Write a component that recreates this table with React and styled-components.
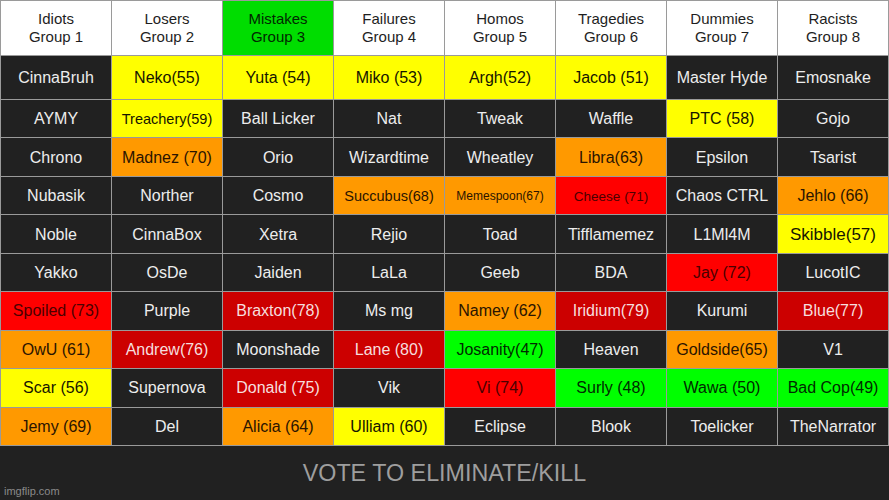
import React from "react";
import styled, { createGlobalStyle } from "styled-components";

const Global = createGlobalStyle`
  html, body { margin: 0; padding: 0; background: #212121; }
  body { font-family: "Liberation Sans", Arial, sans-serif; }
`;

const tones = {
  d: { bg: "#212121", fg: "#ededed" },
  y: { bg: "#ffff00", fg: "#161600" },
  o: { bg: "#ff9900", fg: "#2a1400" },
  r: { bg: "#ff0000", fg: "#4a0000" },
  R: { bg: "#cc0000", fg: "#f6dede" },
  g: { bg: "#00ff00", fg: "#002a00" },
  w: { bg: "#ffffff", fg: "#1e1e1e" },
  G: { bg: "#00dd00", fg: "#002800" },
};

const Page = styled.div`
  width: 889px;
  height: 500px;
  display: flex;
  flex-direction: column;
  background: #212121;
  overflow: hidden;
`;

const Board = styled.div`
  display: grid;
  grid-template-columns: repeat(8, 110px);
  grid-template-rows: 54px 43px repeat(9, 37.45px);
  gap: 1px;
  padding: 1px 0 1px 1px;
  background: #9a9a9a;
  width: 889px;
  box-sizing: border-box;
`;

const Cell = styled.div`
  display: flex;
  align-items: center;
  justify-content: center;
  text-align: center;
  padding-top: 1px;
  box-sizing: border-box;
  background: ${(p) => tones[p.$tone].bg};
  color: ${(p) => tones[p.$tone].fg};
  font-size: ${(p) => p.$size || 16}px;
  white-space: nowrap;
`;

const HeadCell = styled(Cell)`
  font-size: 15px;
  line-height: 18px;
  padding-top: 0;
  flex-direction: column;
`;

const Footer = styled.div`
  flex: 1;
  position: relative;
  display: flex;
  align-items: center;
  justify-content: center;
`;

const Vote = styled.div`
  color: #9e9e9e;
  font-size: 23.3px;
  margin-top: 2px;
`;

const Watermark = styled.div`
  position: absolute;
  left: 4px;
  bottom: 3px;
  font-size: 11px;
  color: #8a8a8a;
`;

const headers = [
  ["Idiots", "w"],
  ["Losers", "w"],
  ["Mistakes", "G"],
  ["Failures", "w"],
  ["Homos", "w"],
  ["Tragedies", "w"],
  ["Dummies", "w"],
  ["Racists", "w"],
];

const rows = [
  [["CinnaBruh", "d"], ["Neko(55)", "y"], ["Yuta (54)", "y"], ["Miko (53)", "y"], ["Argh(52)", "y"], ["Jacob (51)", "y"], ["Master Hyde", "d"], ["Emosnake", "d"]],
  [["AYMY", "d"], ["Treachery(59)", "y", 14.5], ["Ball Licker", "d"], ["Nat", "d"], ["Tweak", "d"], ["Waffle", "d"], ["PTC (58)", "y"], ["Gojo", "d"]],
  [["Chrono", "d"], ["Madnez (70)", "o"], ["Orio", "d"], ["Wizardtime", "d"], ["Wheatley", "d"], ["Libra(63)", "o"], ["Epsilon", "d"], ["Tsarist", "d"]],
  [["Nubasik", "d"], ["Norther", "d"], ["Cosmo", "d"], ["Succubus(68)", "o", 14.5], ["Memespoon(67)", "o", 12], ["Cheese (71)", "r", 13.5], ["Chaos CTRL", "d"], ["Jehlo (66)", "o"]],
  [["Noble", "d"], ["CinnaBox", "d"], ["Xetra", "d"], ["Rejio", "d"], ["Toad", "d"], ["Tifflamemez", "d"], ["L1Ml4M", "d"], ["Skibble(57)", "y", 17]],
  [["Yakko", "d"], ["OsDe", "d"], ["Jaiden", "d"], ["LaLa", "d"], ["Geeb", "d"], ["BDA", "d"], ["Jay (72)", "r"], ["LucotIC", "d"]],
  [["Spoiled (73)", "r"], ["Purple", "d"], ["Braxton(78)", "R"], ["Ms mg", "d"], ["Namey (62)", "o"], ["Iridium(79)", "R"], ["Kurumi", "d"], ["Blue(77)", "R"]],
  [["OwU (61)", "o"], ["Andrew(76)", "R"], ["Moonshade", "d"], ["Lane (80)", "R"], ["Josanity(47)", "g"], ["Heaven", "d"], ["Goldside(65)", "o"], ["V1", "d"]],
  [["Scar (56)", "y"], ["Supernova", "d"], ["Donald (75)", "R"], ["Vik", "d"], ["Vi (74)", "r"], ["Surly (48)", "g"], ["Wawa (50)", "g"], ["Bad Cop(49)", "g"]],
  [["Jemy (69)", "o"], ["Del", "d"], ["Alicia (64)", "o"], ["Ulliam (60)", "y"], ["Eclipse", "d"], ["Blook", "d"], ["Toelicker", "d"], ["TheNarrator", "d"]],
];

export default function App() {
  return (
    <>
      <Global />
      <Page>
        <Board>
          {headers.map(([name, tone], i) => (
            <HeadCell key={name} $tone={tone}>
              <span>{name}</span>
              <span>Group {i + 1}</span>
            </HeadCell>
          ))}
          {rows.map((row, ri) =>
            row.map(([text, tone, size], ci) => (
              <Cell key={`${ri}-${ci}`} $tone={tone} $size={size}>
                {text}
              </Cell>
            ))
          )}
        </Board>
        <Footer>
          <Vote>VOTE TO ELIMINATE/KILL</Vote>
          <Watermark>imgflip.com</Watermark>
        </Footer>
      </Page>
    </>
  );
}
